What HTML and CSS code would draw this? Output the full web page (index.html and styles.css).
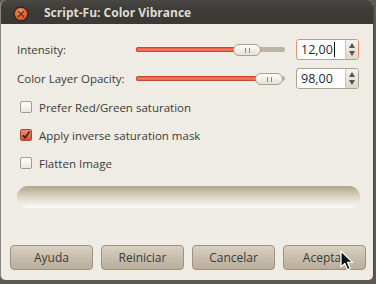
FILE: index.html
```html
<!DOCTYPE html>
<html lang="es">
<head>
    <meta charset="UTF-8">
    <meta name="viewport" content="width=device-width, initial-scale=1.0">
    <title>Script-Fu: Color Vibrance</title>
    <link rel="stylesheet" href="styles.css">
</head>
<body>
    <div class="window">
        <div class="titlebar">
            <span class="close-btn">
                <svg width="16" height="16" viewBox="0 0 16 16">
                    <defs>
                        <radialGradient id="closeGrad" cx="0.45" cy="0.35" r="0.7">
                            <stop offset="0" stop-color="#f8a47c"/>
                            <stop offset="0.5" stop-color="#ef6a35"/>
                            <stop offset="1" stop-color="#c8461b"/>
                        </radialGradient>
                    </defs>
                    <circle cx="8" cy="8" r="7.5" fill="#26251f"/>
                    <circle cx="8" cy="8" r="6.3" fill="url(#closeGrad)"/>
                    <path d="M5.6 5.6 L10.4 10.4 M10.4 5.6 L5.6 10.4" stroke="#5e4034" stroke-width="1.6" stroke-linecap="round"/>
                </svg>
            </span>
            <span class="title">Script-Fu: Color Vibrance</span>
        </div>

        <div class="content">
            <div class="param-grid">
                <span class="param-label">Intensity:</span>
                <div class="slider">
                    <div class="track"><div class="fill" style="width: 108px"></div></div>
                    <div class="thumb" style="left: 97px"><span class="grip"></span></div>
                </div>
                <div class="spin focused">
                    <span class="spin-text">12,00<span class="caret"></span></span>
                    <span class="spin-arrows"><span class="arrow-up"></span><span class="arrow-down"></span></span>
                </div>

                <span class="param-label">Color Layer Opacity:</span>
                <div class="slider">
                    <div class="track"><div class="fill" style="width: 132px"></div></div>
                    <div class="thumb" style="left: 119px"><span class="grip"></span></div>
                </div>
                <div class="spin">
                    <span class="spin-text">98,00</span>
                    <span class="spin-arrows"><span class="arrow-up"></span><span class="arrow-down"></span></span>
                </div>
            </div>

            <div class="checks">
                <label class="check-row"><span class="checkbox"></span>Prefer Red/Green saturation</label>
                <label class="check-row">
                    <span class="checkbox checked">
                        <svg width="10" height="10" viewBox="0 0 10 10"><path d="M2 5.2 L4 7.8 L8.6 1.6" fill="none" stroke="#2d2a26" stroke-width="1.7"/></svg>
                    </span>Apply inverse saturation mask
                </label>
                <label class="check-row"><span class="checkbox"></span>Flatten Image</label>
            </div>

            <div class="progress"></div>
        </div>

        <div class="buttons">
            <button>Ayuda</button>
            <button>Reiniciar</button>
            <button>Cancelar</button>
            <button>Aceptar</button>
        </div>
    </div>

    <svg class="pointer" width="15" height="22" viewBox="0 0 15 22">
        <path d="M1 1 L1 17 L4.8 13.4 L7.6 19.8 L10.2 18.6 L7.5 12.4 L12.6 12.4 Z" fill="#111" stroke="#fff" stroke-width="1.2" stroke-linejoin="round"/>
    </svg>
</body>
</html>
```

FILE: styles.css
```css
body {
    margin: 0;
    width: 376px;
    height: 284px;
    overflow: hidden;
    background: #5e5a53;
    font-family: "Open Sans", "DejaVu Sans", sans-serif;
    position: relative;
}

.window {
    width: 372px;
    height: 280px;
    border-left: 1px solid #8a857c;
    border-right: 1px solid #4a4741;
    border-radius: 6px 6px 5px 5px;
    background: #efebe5;
    overflow: hidden;
}

.titlebar {
    height: 24px;
    display: flex;
    align-items: center;
    padding-left: 12px;
    background: linear-gradient(#4a4843, #3c3b37 40%, #3a3935);
}

.close-btn {
    width: 16px;
    height: 16px;
    margin-top: 2px;
}

.title {
    margin-left: 15px;
    color: #dfdbd2;
    font-weight: bold;
    font-size: 12px;
}

.content {
    padding: 15px 14px 0 16px;
}

.param-grid {
    display: grid;
    grid-template-columns: 119px 160px 63px;
    grid-auto-rows: 21px;
    row-gap: 8px;
    align-items: center;
}

.param-label {
    font-size: 11.5px;
    color: #3c3b37;
}

.slider {
    position: relative;
    width: 149px;
    height: 11px;
}

.track {
    position: absolute;
    left: 0;
    right: 0;
    top: 3px;
    height: 5px;
    border-radius: 3px;
    background: #bcb4a3;
}

.fill {
    height: 5px;
    border-radius: 3px;
    background: linear-gradient(#d9452e, #f57662 50%, #e65a43);
    box-shadow: inset 0 0 0 1px #c9472f;
}

.thumb {
    position: absolute;
    top: 0;
    width: 26px;
    height: 10px;
    border: 1px solid #aaa08d;
    border-radius: 6px;
    background: linear-gradient(#fdfcfb, #e6e1d8);
    display: flex;
    justify-content: center;
    align-items: center;
}

.grip {
    width: 3px;
    height: 5px;
    border-left: 1px solid #8f8676;
    border-right: 1px solid #8f8676;
}

.spin {
    height: 19px;
    border: 1px solid #aba28f;
    border-radius: 3px;
    background: #fff;
    display: flex;
}

.spin.focused {
    border-color: #ee8c73;
}

.spin-text {
    flex: 1;
    padding-left: 4px;
    font-size: 12.5px;
    line-height: 19px;
    color: #262a33;
    display: flex;
    align-items: center;
}

.caret {
    width: 1px;
    height: 15px;
    background: #111;
    margin-left: 1px;
}

.spin-arrows {
    width: 12px;
    border-left: 1px solid #cfc8ba;
    border-radius: 0 2px 2px 0;
    background: linear-gradient(#f6f4f0, #ddd7cb);
    display: flex;
    flex-direction: column;
    align-items: center;
    justify-content: center;
    gap: 3px;
}

.arrow-up {
    border-left: 3px solid transparent;
    border-right: 3px solid transparent;
    border-bottom: 5px solid #57524a;
}

.arrow-down {
    border-left: 3px solid transparent;
    border-right: 3px solid transparent;
    border-top: 5px solid #57524a;
}

.checks {
    margin-top: 4px;
}

.check-row {
    height: 28px;
    display: flex;
    align-items: center;
    font-size: 11.5px;
    color: #3c3b37;
}

.checkbox {
    width: 10px;
    height: 10px;
    margin: 0 7px 0 3px;
    border: 1px solid #a39b8a;
    border-radius: 2px;
    background: linear-gradient(#ffffff, #ebe7e0);
    display: flex;
    align-items: center;
    justify-content: center;
}

.checkbox.checked {
    border-color: #b4412c;
    background: linear-gradient(#f58a72, #de4d33);
}

.progress {
    margin-top: 9px;
    width: 343px;
    height: 22px;
    border-radius: 11px;
    background: linear-gradient(#b2a489, #d9d0c0 45%, #fdfcfa);
}

.buttons {
    margin-top: 37px;
    padding-left: 9px;
    display: flex;
    gap: 8px;
}

button {
    width: 83px;
    height: 25px;
    padding: 0;
    border: 1px solid #9e927f;
    border-radius: 4px;
    background: linear-gradient(#d8d0c3, #b9ad9a);
    color: #3c3b37;
    font-family: "Open Sans", "DejaVu Sans", sans-serif;
    font-size: 12px;
}

.pointer {
    position: absolute;
    left: 340px;
    top: 250px;
}
```
